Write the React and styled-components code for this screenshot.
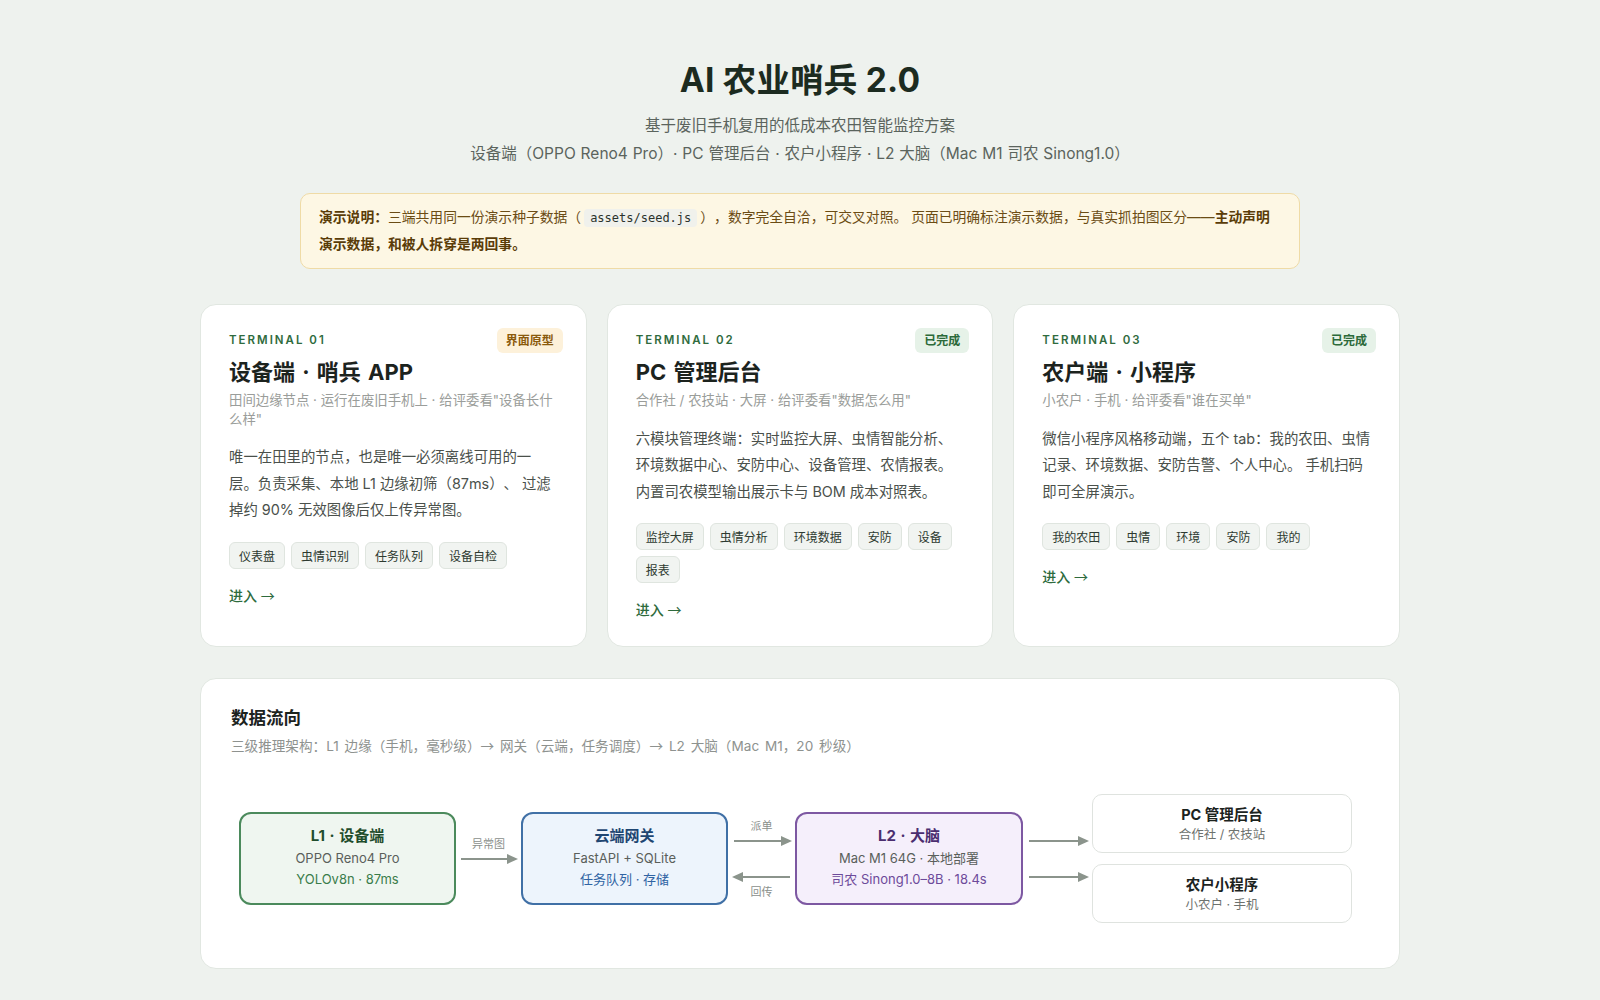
import React from "react";
import styled, { createGlobalStyle } from "styled-components";

const GlobalStyle = createGlobalStyle`
  html, body {
    margin: 0;
    padding: 0;
    background: #eef2ee;
  }
  body {
    font-family: "Inter", "Noto Sans CJK SC", sans-serif;
    color: #1c2b20;
    -webkit-font-smoothing: antialiased;
    text-spacing-trim: space-all;
  }
  * { box-sizing: border-box; }
`;

const Page = styled.main`
  padding: 58px 0 40px;
  display: flex;
  flex-direction: column;
  align-items: center;
`;

const Hero = styled.header`
  text-align: center;
`;

const Title = styled.h1`
  margin: 0;
  font-size: 33.5px;
  line-height: 44px;
  font-weight: 700;
  color: #1c2b20;
  letter-spacing: 0.2px;
`;

const Lead = styled.p`
  margin: 10px 0 0;
  font-size: 15.5px;
  line-height: 27.5px;
  color: #5b645d;
  word-spacing: 0.5px;
`;

/* CJK arrow glyph: long, thin arrow as in the system UI font */
const Arr = styled.span`
  font-family: "Noto Sans CJK SC", sans-serif;
  font-weight: 400;
`;

const Notice = styled.div`
  width: 1000px;
  margin-top: 26px;
  padding: 10px 18px 11px;
  background: #fdf7e4;
  border: 1px solid #efdba6;
  border-radius: 10px;
  font-size: 13.8px;
  line-height: 26px;
  color: #6b4c14;
`;

const Strong = styled.strong`
  font-weight: 700;
  color: #5a3c08;
`;

const Code = styled.code`
  font-family: "DejaVu Sans Mono", "Liberation Mono", monospace;
  font-size: 12px;
  background: #f0f1ec;
  color: #2b332d;
  padding: 2px 6px;
  border-radius: 4px;
  margin: 0 3px;
`;

const CardGrid = styled.section`
  width: 1200px;
  margin-top: 35px;
  display: grid;
  grid-template-columns: repeat(3, 1fr);
  gap: 20px;
`;

const Card = styled.article`
  position: relative;
  background: #ffffff;
  border: 1px solid #e1e7e1;
  border-radius: 16px;
  padding: 27px 28px 26px;
  display: flex;
  flex-direction: column;
`;

const Kicker = styled.div`
  font-size: 11.5px;
  line-height: 16px;
  font-weight: 600;
  letter-spacing: 2px;
  color: #2f6b3e;
`;

const Badge = styled.span`
  position: absolute;
  top: 23px;
  right: 23px;
  height: 25px;
  padding: 0 9px;
  border-radius: 6px;
  font-size: 12px;
  font-weight: 700;
  line-height: 25px;
  background: ${(p) => (p.$tone === "draft" ? "#fdf1da" : "#e6f2e8")};
  color: ${(p) => (p.$tone === "draft" ? "#8a5a0c" : "#2c6a3a")};
`;

const CardTitle = styled.h2`
  margin: 9px 0 0;
  font-size: 22px;
  line-height: 30px;
  font-weight: 700;
  color: #1c231e;
  word-spacing: 2px;
`;

const CardSub = styled.p`
  margin: 4px 0 0;
  font-size: 13.4px;
  line-height: 18.5px;
  color: #9a9d9a;
`;

const CardBody = styled.p`
  margin: 16px 0 0;
  font-size: 14.4px;
  line-height: 26.5px;
  color: #4a504b;
`;

const Tags = styled.div`
  margin-top: 18px;
  display: flex;
  flex-wrap: wrap;
  gap: 6px;
`;

const Tag = styled.span`
  height: 27px;
  padding: 0 9px;
  display: inline-flex;
  align-items: center;
  font-size: 12px;
  color: #2d3a30;
  background: #f1f4f1;
  border: 1px solid #dfe5df;
  border-radius: 6px;
`;

const EnterLink = styled.a`
  margin-top: 16px;
  font-size: 14px;
  line-height: 21px;
  font-weight: 500;
  color: #2e6b3d;
  text-decoration: none;
  cursor: pointer;
`;

const FlowPanel = styled.section`
  width: 1200px;
  margin-top: 31px;
  background: #ffffff;
  border: 1px solid #e1e7e1;
  border-radius: 16px;
  padding: 27px 30px 45px;
`;

const PanelTitle = styled.h3`
  margin: 0;
  font-size: 17.5px;
  line-height: 24px;
  font-weight: 700;
  color: #1c231e;
`;

const PanelSub = styled.p`
  margin: 5px 0 0;
  font-size: 13.6px;
  line-height: 20px;
  color: #8e928f;
  word-spacing: 2px;
`;

const Diagram = styled.div`
  margin: 38px 0 0 8px;
  display: flex;
  align-items: center;
`;

const palette = {
  green: { border: "#4b8a5c", bg: "#eff6f0", title: "#1f4d2c", accent: "#3a7d4b" },
  blue: { border: "#4070a6", bg: "#edf4fc", title: "#1e4672", accent: "#2f63a3" },
  purple: { border: "#7d58a2", bg: "#f5effb", title: "#4b2d6f", accent: "#6d4a9a" },
};

const Node = styled.div`
  width: ${(p) => p.$w}px;
  height: 93px;
  padding-bottom: 3px;
  border: 2px solid ${(p) => palette[p.$tone].border};
  background: ${(p) => palette[p.$tone].bg};
  border-radius: 12px;
  display: flex;
  flex-direction: column;
  align-items: center;
  justify-content: center;
  text-align: center;
  flex-shrink: 0;
`;

const NodeTitle = styled.div`
  font-size: 15px;
  line-height: 24px;
  font-weight: 700;
  color: ${(p) => palette[p.$tone].title};
  word-spacing: 1px;
`;

const NodeLine = styled.div`
  font-size: 13px;
  line-height: 21.5px;
  color: ${(p) => (p.$accent ? palette[p.$tone].accent : "#5a5f5b")};
`;

const Outputs = styled.div`
  width: 260px;
  display: flex;
  flex-direction: column;
  gap: 11px;
`;

const OutputCard = styled.div`
  height: 59px;
  border: 1.5px solid #dfe3df;
  border-radius: 10px;
  background: #ffffff;
  display: flex;
  flex-direction: column;
  align-items: center;
  justify-content: center;
`;

const OutputTitle = styled.div`
  font-size: 14.5px;
  line-height: 21px;
  font-weight: 700;
  color: #1c231e;
`;

const OutputSub = styled.div`
  font-size: 12.5px;
  line-height: 19px;
  color: #6d726e;
`;

const Link = styled.div`
  width: ${(p) => p.$w}px;
  flex-shrink: 0;
  display: flex;
  flex-direction: column;
  align-items: center;
  gap: ${(p) => p.$gap || 0}px;
`;

const LinkLabel = styled.span`
  font-size: 11px;
  line-height: 14px;
  color: #8a8f8b;
  visibility: ${(p) => (p.$ghost ? "hidden" : "visible")};
`;

const Spacer = styled.div`
  height: ${(p) => p.$h}px;
`;

function Arrow({ width, dir = "right" }) {
  const head = 10;
  const y = 5;
  return (
    <svg width={width} height="10" viewBox={`0 0 ${width} 10`} style={{ display: "block" }}>
      {dir === "right" ? (
        <>
          <line x1="2" y1={y} x2={width - head} y2={y} stroke="#8b948c" strokeWidth="2" />
          <polygon points={`${width - head - 1},0 ${width},${y} ${width - head - 1},10`} fill="#8b948c" />
        </>
      ) : (
        <>
          <line x1={head} y1={y} x2={width - 2} y2={y} stroke="#8b948c" strokeWidth="2" />
          <polygon points={`${head + 1},0 0,${y} ${head + 1},10`} fill="#8b948c" />
        </>
      )}
    </svg>
  );
}

const terminals = [
  {
    no: "01",
    badge: "界面原型",
    tone: "draft",
    title: "设备端 · 哨兵 APP",
    sub: "田间边缘节点 · 运行在废旧手机上 · 给评委看\"设备长什么样\"",
    body: "唯一在田里的节点，也是唯一必须离线可用的一层。负责采集、本地 L1 边缘初筛（87ms）、 过滤掉约 90% 无效图像后仅上传异常图。",
    tags: ["仪表盘", "虫情识别", "任务队列", "设备自检"],
  },
  {
    no: "02",
    badge: "已完成",
    tone: "done",
    title: "PC 管理后台",
    sub: "合作社 / 农技站 · 大屏 · 给评委看\"数据怎么用\"",
    body: "六模块管理终端：实时监控大屏、虫情智能分析、环境数据中心、安防中心、设备管理、农情报表。内置司农模型输出展示卡与 BOM 成本对照表。",
    tags: ["监控大屏", "虫情分析", "环境数据", "安防", "设备", "报表"],
  },
  {
    no: "03",
    badge: "已完成",
    tone: "done",
    title: "农户端 · 小程序",
    sub: "小农户 · 手机 · 给评委看\"谁在买单\"",
    body: "微信小程序风格移动端，五个 tab：我的农田、虫情记录、环境数据、安防告警、个人中心。 手机扫码即可全屏演示。",
    tags: ["我的农田", "虫情", "环境", "安防", "我的"],
  },
];

export default function App() {
  return (
    <>
      <GlobalStyle />
      <Page>
        <Hero>
          <Title>AI 农业哨兵 2.0</Title>
          <Lead>
            基于废旧手机复用的低成本农田智能监控方案
            <br />
            设备端（OPPO Reno4 Pro）· PC 管理后台 · 农户小程序 · L2 大脑（Mac M1 司农 Sinong1.0）
          </Lead>
        </Hero>

        <Notice>
          <Strong>演示说明：</Strong>三端共用同一份演示种子数据（<Code>assets/seed.js</Code>），数字完全自洽，可交叉对照。 页面已明确标注演示数据，与真实抓拍图区分——
          <Strong>主动声明演示数据，和被人拆穿是两回事。</Strong>
        </Notice>

        <CardGrid>
          {terminals.map((t) => (
            <Card key={t.no}>
              <Kicker>TERMINAL {t.no}</Kicker>
              <Badge $tone={t.tone}>{t.badge}</Badge>
              <CardTitle>{t.title}</CardTitle>
              <CardSub>{t.sub}</CardSub>
              <CardBody>{t.body}</CardBody>
              <Tags>
                {t.tags.map((g) => (
                  <Tag key={g}>{g}</Tag>
                ))}
              </Tags>
              <EnterLink>
                进入 <Arr>→</Arr>
              </EnterLink>
            </Card>
          ))}
        </CardGrid>

        <FlowPanel>
          <PanelTitle>数据流向</PanelTitle>
          <PanelSub>
            三级推理架构：L1 边缘（手机，毫秒级）<Arr>→</Arr> 网关（云端，任务调度）<Arr>→</Arr> L2 大脑（Mac M1，20 秒级）
          </PanelSub>

          <Diagram>
            <Node $tone="green" $w={217}>
              <NodeTitle $tone="green">L1 · 设备端</NodeTitle>
              <NodeLine $tone="green">OPPO Reno4 Pro</NodeLine>
              <NodeLine $tone="green" $accent>YOLOv8n · 87ms</NodeLine>
            </Node>

            <Link $w={65} $gap={3}>
              <LinkLabel>异常图</LinkLabel>
              <Arrow width={59} />
              <LinkLabel $ghost>异常图</LinkLabel>
            </Link>

            <Node $tone="blue" $w={207}>
              <NodeTitle $tone="blue">云端网关</NodeTitle>
              <NodeLine $tone="blue">FastAPI + SQLite</NodeLine>
              <NodeLine $tone="blue" $accent>任务队列 · 存储</NodeLine>
            </Node>

            <Link $w={67} $gap={3}>
              <LinkLabel>派单</LinkLabel>
              <Arrow width={60} />
              <Spacer $h={20} />
              <Arrow width={60} dir="left" />
              <LinkLabel>回传</LinkLabel>
            </Link>

            <Node $tone="purple" $w={228}>
              <NodeTitle $tone="purple">L2 · 大脑</NodeTitle>
              <NodeLine $tone="purple">Mac M1 64G · 本地部署</NodeLine>
              <NodeLine $tone="purple" $accent>司农 Sinong1.0–8B · 18.4s</NodeLine>
            </Node>

            <Link $w={69} $gap={26}>
              <Arrow width={62} />
              <Arrow width={62} />
            </Link>

            <Outputs>
              <OutputCard>
                <OutputTitle>PC 管理后台</OutputTitle>
                <OutputSub>合作社 / 农技站</OutputSub>
              </OutputCard>
              <OutputCard>
                <OutputTitle>农户小程序</OutputTitle>
                <OutputSub>小农户 · 手机</OutputSub>
              </OutputCard>
            </Outputs>
          </Diagram>
        </FlowPanel>
      </Page>
    </>
  );
}
